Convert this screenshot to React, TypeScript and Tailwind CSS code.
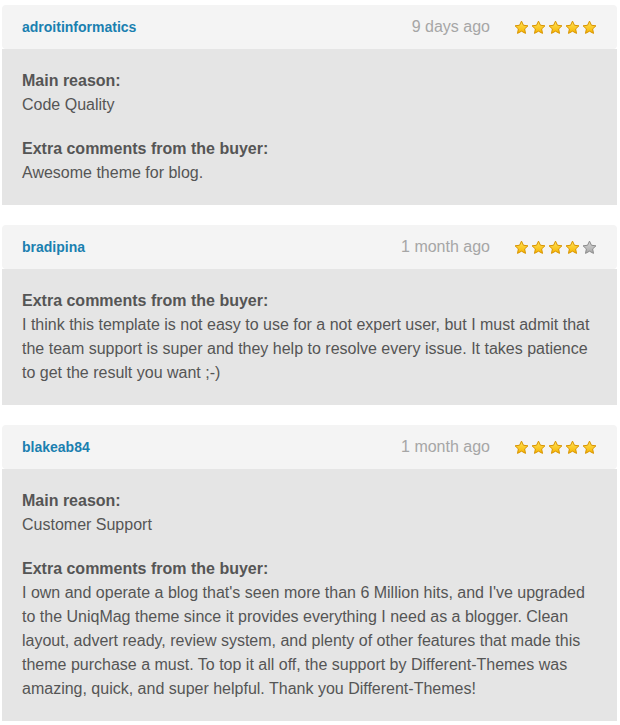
import { useId } from "react";

type Review = {
  user: string;
  when: string;
  rating: number;
  reason?: string;
  comment: string;
};

const REVIEWS: Review[] = [
  {
    user: "adroitinformatics",
    when: "9 days ago",
    rating: 5,
    reason: "Code Quality",
    comment: "Awesome theme for blog.",
  },
  {
    user: "bradipina",
    when: "1 month ago",
    rating: 4,
    comment:
      "I think this template is not easy to use for a not expert user, but I must admit that the team support is super and they help to resolve every issue. It takes patience to get the result you want ;-)",
  },
  {
    user: "blakeab84",
    when: "1 month ago",
    rating: 5,
    reason: "Customer Support",
    comment:
      "I own and operate a blog that's seen more than 6 Million hits, and I've upgraded to the UniqMag theme since it provides everything I need as a blogger. Clean layout, advert ready, review system, and plenty of other features that made this theme purchase a must. To top it all off, the support by Different-Themes was amazing, quick, and super helpful. Thank you Different-Themes!",
  },
];

function Star({ filled }: { filled: boolean }) {
  const id = useId();
  return (
    <svg width="15" height="15" viewBox="0 0 24 24" className="block">
      <defs>
        <linearGradient id={id} x1="0" y1="0" x2="0" y2="1">
          <stop offset="0" stopColor={filled ? "#ffe35a" : "#d6d6d6"} />
          <stop offset="1" stopColor={filled ? "#f7b500" : "#a8a8a8"} />
        </linearGradient>
      </defs>
      <path
        d="M12 1.8l3.1 6.6 7.2.9-5.3 5 1.4 7.1L12 17.9l-6.4 3.5 1.4-7.1-5.3-5 7.2-.9z"
        fill={`url(#${id})`}
        stroke={filled ? "#d99400" : "#8c8c8c"}
        strokeWidth="1.6"
        strokeLinejoin="round"
      />
    </svg>
  );
}

function ReviewCard({ review }: { review: Review }) {
  return (
    <div>
      <div className="h-[44px] flex items-center justify-between rounded-[4px] bg-[#f4f4f4] pl-5 pr-[20px]">
        <span className="text-[14px] font-bold text-[#1a80b0]">{review.user}</span>
        <div className="flex items-center">
          <span className="text-[16px] text-[#a6a6a6] mr-[24px]">{review.when}</span>
          <div className="flex gap-[2px]">
            {[1, 2, 3, 4, 5].map((n) => (
              <Star key={n} filled={n <= review.rating} />
            ))}
          </div>
        </div>
      </div>
      <div className="bg-[#e5e5e5] px-5 pt-5 pb-5 text-[16px] leading-[24px] text-[#555]">
        {review.reason && (
          <div className="mb-5">
            <p className="font-bold">Main reason:</p>
            <p>{review.reason}</p>
          </div>
        )}
        <p className="font-bold">Extra comments from the buyer:</p>
        <p>{review.comment}</p>
      </div>
    </div>
  );
}

export default function App() {
  return (
    <div
      className="bg-white pt-[5px] pl-[2px] pr-[3px] flex flex-col gap-5"
      style={{ fontFamily: '"Liberation Sans", Arial, sans-serif' }}
    >
      {REVIEWS.map((r) => (
        <ReviewCard key={r.user} review={r} />
      ))}
    </div>
  );
}
